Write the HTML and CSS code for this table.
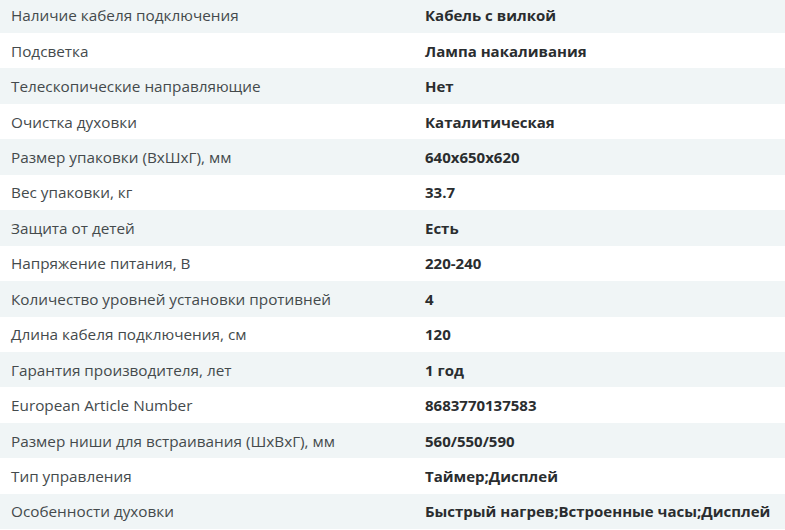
FILE: index.html
```html
<!DOCTYPE html>
<html lang="ru">
<head>
<meta charset="utf-8">
<link rel="stylesheet" href="styles.css">
</head>
<body>
<div class="specs">
  <div class="row"><div class="label">Наличие кабеля подключения</div><div class="value">Кабель с вилкой</div></div>
  <div class="row"><div class="label">Подсветка</div><div class="value">Лампа накаливания</div></div>
  <div class="row"><div class="label">Телескопические направляющие</div><div class="value">Нет</div></div>
  <div class="row"><div class="label">Очистка духовки</div><div class="value">Каталитическая</div></div>
  <div class="row"><div class="label">Размер упаковки (ВхШхГ), мм</div><div class="value">640x650x620</div></div>
  <div class="row"><div class="label">Вес упаковки, кг</div><div class="value">33.7</div></div>
  <div class="row"><div class="label">Защита от детей</div><div class="value">Есть</div></div>
  <div class="row"><div class="label">Напряжение питания, В</div><div class="value">220-240</div></div>
  <div class="row"><div class="label">Количество уровней установки противней</div><div class="value">4</div></div>
  <div class="row"><div class="label">Длина кабеля подключения, см</div><div class="value">120</div></div>
  <div class="row"><div class="label">Гарантия производителя, лет</div><div class="value">1 год</div></div>
  <div class="row"><div class="label">European Article Number</div><div class="value">8683770137583</div></div>
  <div class="row"><div class="label">Размер ниши для встраивания (ШхВхГ), мм</div><div class="value">560/550/590</div></div>
  <div class="row"><div class="label">Тип управления</div><div class="value">Таймер;Дисплей</div></div>
  <div class="row"><div class="label">Особенности духовки</div><div class="value">Быстрый нагрев;Встроенные часы;Дисплей</div></div>
</div>
</body>
</html>
```
FILE: styles.css
```css
html, body {
  margin: 0;
  padding: 0;
  background: #ffffff;
  overflow: hidden;
}
body {
  font-family: "Open Sans", "Noto Sans", sans-serif;
  font-size: 15px;
}
.specs {
  display: flex;
  flex-direction: column;
  margin-top: -2.45px;
}
.row {
  display: grid;
  grid-template-columns: 414px 1fr;
  align-items: center;
  height: 35.45px;
  padding-left: 11px;
}
.row:nth-child(odd) {
  background: #f0f5f6;
}
.label {
  color: #444a4c;
  font-size: 15.3px;
  white-space: nowrap;
}
.value {
  color: #2a2d2f;
  font-weight: 700;
  white-space: nowrap;
}
```
